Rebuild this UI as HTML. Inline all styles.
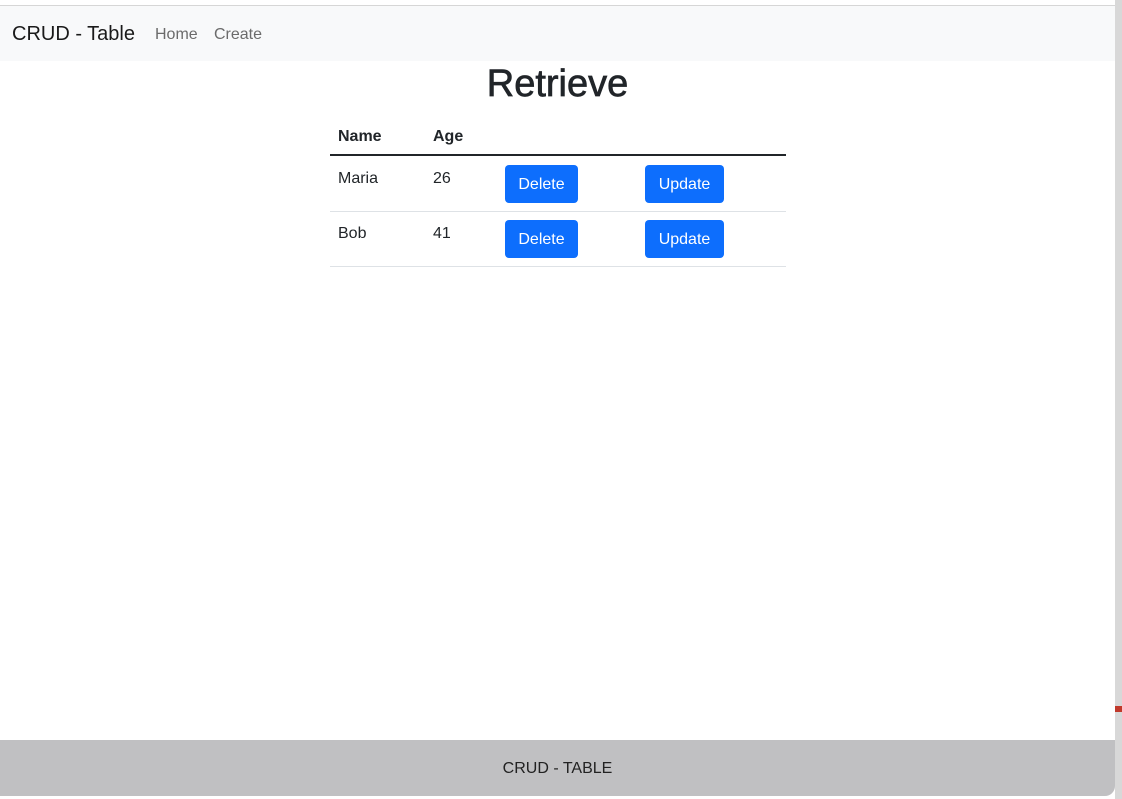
<!DOCTYPE html>
<html><head><meta charset="utf-8"><style>
*{margin:0;padding:0;box-sizing:border-box}
body{width:1122px;height:799px;position:relative;overflow:hidden;background:#fff;font-family:"Liberation Sans",sans-serif;color:#212529}
.abs{position:absolute}
.side{left:1115px;top:0;width:7px;height:799px;background:#d8d8d8}
.nav{left:0;top:5px;width:1115px;height:56px;background:#f8f9fa;border-top:1px solid #d6d6d6}
.nav .b{position:absolute;left:12px;top:17px;font-size:20px;color:#1a1a1a}
.nav .l{position:absolute;top:20px;font-size:16px;color:#6b6b6b}
h1{position:absolute;left:0;width:1115px;top:63px;text-align:center;font-size:38px;font-weight:normal;-webkit-text-stroke:0.7px #212529}
.t{position:absolute;font-size:16px}
.hr{position:absolute;left:330px;width:456px}
.btn{position:absolute;background:#0d6efd;color:#fff;border-radius:4px;font-size:16px;text-align:center;line-height:40px;height:38px}
.foot{left:0;top:740px;width:1115px;height:56px;background:#c0c0c2;border-bottom-right-radius:10px;text-align:center;line-height:57px;font-size:16px;color:#222}
</style></head><body>
<div class="abs side"></div>
<div class="abs" style="left:1115px;top:706px;width:7px;height:6px;background:#c0392b"></div>
<div class="abs nav"><span class="b">CRUD - Table</span><span class="l" style="left:155px">Home</span><span class="l" style="left:214px">Create</span></div>
<h1>Retrieve</h1>
<div class="t" style="left:338px;top:128px;font-weight:bold">Name</div>
<div class="t" style="left:433px;top:128px;font-weight:bold">Age</div>
<div class="hr" style="top:154px;height:2px;background:#212529"></div>
<div class="t" style="left:338px;top:170px">Maria</div>
<div class="t" style="left:433px;top:170px">26</div>
<div class="btn" style="left:505px;top:165px;width:73px">Delete</div>
<div class="btn" style="left:645px;top:165px;width:79px">Update</div>
<div class="hr" style="top:211px;height:1px;background:#dee2e6"></div>
<div class="t" style="left:338px;top:225px">Bob</div>
<div class="t" style="left:433px;top:225px">41</div>
<div class="btn" style="left:505px;top:220px;width:73px">Delete</div>
<div class="btn" style="left:645px;top:220px;width:79px">Update</div>
<div class="hr" style="top:266px;height:1px;background:#dee2e6"></div>
<div class="abs foot">CRUD - TABLE</div>
</body></html>
